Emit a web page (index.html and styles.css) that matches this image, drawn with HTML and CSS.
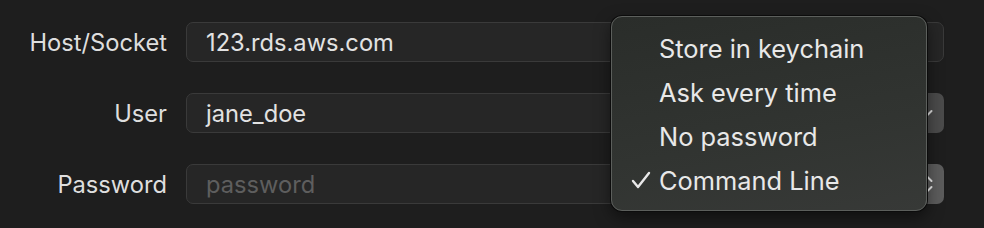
FILE: index.html
```html
<!DOCTYPE html>
<html>
<head>
<meta charset="utf-8">
<link rel="stylesheet" href="styles.css">
</head>
<body>
<div class="form">
  <div class="label">Host/Socket</div>
  <div class="field"><span class="value">123.rds.aws.com</span></div>

  <div class="label">User</div>
  <div class="combo">
    <div class="field"><span class="value">jane_doe</span></div>
    <div class="btn btn-dark">
      <svg width="14" height="22" viewBox="0 0 14 22"><path d="M2.5 9 L7 13.5 L11.5 9" fill="none" stroke="#dcdcdc" stroke-width="2" stroke-linecap="round" stroke-linejoin="round"/></svg>
    </div>
  </div>

  <div class="label">Password</div>
  <div class="combo">
    <div class="field"><span class="placeholder">password</span></div>
    <div class="btn btn-light">
      <svg width="14" height="22" viewBox="0 0 14 22"><path d="M2.5 8 L7 3.5 L11.5 8 M2.5 14 L7 18.5 L11.5 14" fill="none" stroke="#ececec" stroke-width="2" stroke-linecap="round" stroke-linejoin="round"/></svg>
    </div>
  </div>
</div>

<div class="menu">
  <div class="item"><span class="check"></span><span>Store in keychain</span></div>
  <div class="item"><span class="check"></span><span>Ask every time</span></div>
  <div class="item"><span class="check"></span><span>No password</span></div>
  <div class="item"><span class="check"><svg width="20" height="18" viewBox="0 0 20 18"><path d="M2 10 L7 16 L18 2" fill="none" stroke="#e8e8e8" stroke-width="2.4" stroke-linecap="round" stroke-linejoin="round"/></svg></span><span>Command Line</span></div>
</div>
</body>
</html>
```

FILE: styles.css
```css
html, body {
  margin: 0;
  padding: 0;
  background: #1e1e1e;
  width: 984px;
  height: 228px;
  overflow: hidden;
  font-family: "Inter", "Noto Sans", sans-serif;
}

.form {
  display: grid;
  grid-template-columns: 167px 758px;
  column-gap: 19px;
  row-gap: 31px;
  padding-top: 22px;
  align-items: center;
}

.label {
  text-align: right;
  color: #dedede;
  font-size: 23.7px;
}

.field {
  box-sizing: border-box;
  height: 40px;
  border: 1px solid #3a3a3a;
  border-radius: 7px;
  background: #262626;
  display: flex;
  align-items: center;
  padding-left: 19px;
  font-size: 23.7px;
  flex: 1;
}

.value { color: #e2e2e2; }
.placeholder { color: #5e5e5e; }

.combo {
  display: flex;
  align-items: center;
  gap: 6px;
}

.btn {
  width: 34px;
  height: 40px;
  border-radius: 7px;
  display: flex;
  align-items: center;
  justify-content: center;
}
.btn-dark { background: #4b4b4b; }
.btn-light { background: #5c5c5c; }

.menu {
  position: absolute;
  left: 611px;
  top: 16px;
  width: 316px;
  height: 195px;
  box-sizing: border-box;
  border-radius: 11px;
  border: 1px solid #5c5f5c;
  box-shadow: 0 0 0 1px #0c0c0c, 0 6px 16px rgba(0,0,0,0.5);
  background: linear-gradient(170deg, #2a2d2a 0%, #313431 60%, #373937 100%);
  padding: 9px 0 8px 0;
  font-size: 25.4px;
  color: #e8e8e8;
}

.item {
  height: 44px;
  display: flex;
  align-items: center;
}

.check {
  width: 47px;
  padding-left: 19px;
  box-sizing: border-box;
  display: flex;
  align-items: center;
}
```
